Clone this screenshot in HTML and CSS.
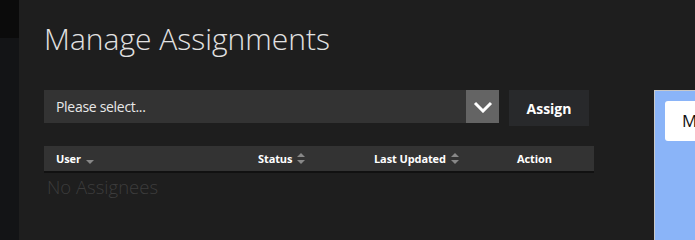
FILE: index.html
```html
<!DOCTYPE html>
<html>
<head>
<meta charset="utf-8">
<link rel="stylesheet" href="styles.css">
</head>
<body>
<div class="page">
  <div class="strip"><div class="strip-top"></div><div class="strip-rest"></div></div>
  <div class="panel">
    <h1 class="title">Manage Assignments</h1>
    <div class="form-row">
      <div class="select">
        <span class="select-text">Please select...</span>
        <span class="select-arrow">
          <svg width="20" height="12" viewBox="0 0 20 12"><path d="M2 2 L10 10 L18 2" fill="none" stroke="#fff" stroke-width="3"/></svg>
        </span>
      </div>
      <button class="btn">Assign</button>
    </div>
    <div class="table-head">
      <div class="th">User <span class="sort"><span class="tri-up hidden"></span><span class="tri-down"></span></span></div>
      <div class="th">Status <span class="sort"><span class="tri-up"></span><span class="tri-down"></span></span></div>
      <div class="th">Last Updated <span class="sort"><span class="tri-up"></span><span class="tri-down"></span></span></div>
      <div class="th">Action</div>
    </div>
    <div class="empty">No Assignees</div>
  </div>
  <div class="side">
    <div class="preview"><div class="card">M</div></div>
  </div>
</div>
</body>
</html>
```
FILE: styles.css
```css
html, body { margin: 0; padding: 0; }
body { background: #1e1e1e; font-family: "Open Sans", sans-serif; width: 695px; height: 240px; overflow: hidden; }
.page { display: flex; height: 240px; }
.strip { width: 19px; display: flex; flex-direction: column; flex-shrink: 0; }
.strip-top { height: 38px; background: #0b0b0b; }
.strip-rest { flex: 1; background: #131416; }
.panel { width: 610px; padding-left: 25px; flex-shrink: 0; background: #1e1e1e; }
.title { margin: 0; padding-top: 20px; height: 90px; box-sizing: border-box; font-weight: 300; font-size: 30px; line-height: 38px; color: #e2e2e2; letter-spacing: 0; }
.form-row { display: flex; gap: 10px; align-items: flex-start; }
.select { width: 455px; height: 33px; background: #333333; display: flex; align-items: center; justify-content: space-between; }
.select-text { padding-left: 12px; font-size: 14px; color: #e8e8e8; letter-spacing: -0.3px; }
.select-arrow { width: 33px; height: 33px; background: #646464; display: flex; align-items: center; justify-content: center; }
.btn { width: 80px; height: 36px; background: #28292b; border: none; color: #fff; font-family: "Open Sans", sans-serif; font-weight: 700; font-size: 14px; padding: 0; }
.table-head { margin-top: 20px; width: 550px; height: 25px; background: #333333; border-bottom: 2px solid #111; display: grid; grid-template-columns: 202px 116px 143px 89px; align-items: center; }
.th { padding-left: 12px; font-size: 11px; font-weight: 700; color: #fff; display: flex; align-items: center; gap: 4px; letter-spacing: -0.1px; }
.sort { display: inline-flex; flex-direction: column; gap: 3px; margin-left: 1px; }
.tri-up { width: 0; height: 0; border-left: 4px solid transparent; border-right: 4px solid transparent; border-bottom: 4px solid #888; }
.tri-down { width: 0; height: 0; border-left: 4px solid transparent; border-right: 4px solid transparent; border-top: 4px solid #888; }
.hidden { visibility: hidden; }
.empty { padding-left: 3px; font-size: 18.5px; font-weight: 300; color: #3c3c3c; line-height: 24px; margin-top: 2px; }
.side { flex: 1; padding-top: 90px; }
.preview { height: 150px; background: #8ab4f8; border-left: 1px solid #c8c8c8; border-top: 1px solid #c8c8c8; padding: 10px 0 0 10px; }
.card { background: #fff; border-radius: 3px 0 0 3px; height: 40px; padding-left: 17px; font-family: "Open Sans", sans-serif; font-size: 17px; line-height: 40px; color: #111; }
```
